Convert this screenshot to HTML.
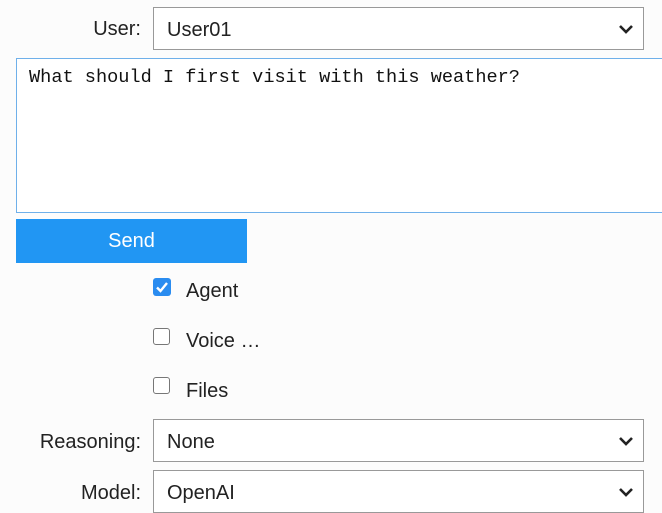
<!DOCTYPE html>
<html><head><style>
body{margin:0;width:662px;height:513px;background:#fcfcfc;font-family:"Liberation Sans",sans-serif;font-size:20px;color:#222;position:relative;overflow:hidden}
.a{position:absolute}
.lbl{position:absolute;text-align:right;width:141px;left:0}
.sel{position:absolute;left:153px;width:489px;height:41px;border:1px solid #999;background:#fff;box-sizing:content-box}
.sel span{position:absolute;left:13px;top:11px}
.sel svg{position:absolute;right:9px;top:15px}
.cb{position:absolute;left:153px;width:15px;height:15px;border:1.5px solid #777;border-radius:3px;background:#fff}
</style></head><body>
<div class="lbl" style="top:18px">User:</div>
<div class="sel" style="top:7px"><span>User01</span><svg width="16" height="12" viewBox="0 0 16 12"><path d="M2 3 L8 9 L14 3" fill="none" stroke="#222" stroke-width="2.6"/></svg></div>
<div class="a" style="left:16px;top:58px;width:660px;height:153px;border:1px solid #6fb0ea;background:#fff"></div>
<div class="a" style="left:29px;top:67px;font-family:'Liberation Mono',monospace;font-size:18.6px;color:#111">What should I first visit with this weather?</div>
<div class="a" style="left:16px;top:219px;width:231px;height:44px;background:#2196f3;color:#fff;text-align:center;line-height:45px">Send</div>
<div class="a" style="left:153px;top:278px;width:18px;height:18px;background:#2a8cf0;border-radius:3px"><svg width="18" height="18" viewBox="0 0 18 18"><path d="M4 9.5 L7.5 13 L14 5" fill="none" stroke="#fff" stroke-width="2.4"/></svg></div>
<div class="a" style="left:186px;top:280px">Agent</div>
<div class="cb" style="top:328px"></div>
<div class="a" style="left:186px;top:330px">Voice …</div>
<div class="cb" style="top:377px"></div>
<div class="a" style="left:186px;top:380px">Files</div>
<div class="lbl" style="top:431px">Reasoning:</div>
<div class="sel" style="top:419px"><span>None</span><svg width="16" height="12" viewBox="0 0 16 12"><path d="M2 3 L8 9 L14 3" fill="none" stroke="#222" stroke-width="2.6"/></svg></div>
<div class="lbl" style="top:482px">Model:</div>
<div class="sel" style="top:470px"><span>OpenAI</span><svg width="16" height="12" viewBox="0 0 16 12"><path d="M2 3 L8 9 L14 3" fill="none" stroke="#222" stroke-width="2.6"/></svg></div>
</body></html>
